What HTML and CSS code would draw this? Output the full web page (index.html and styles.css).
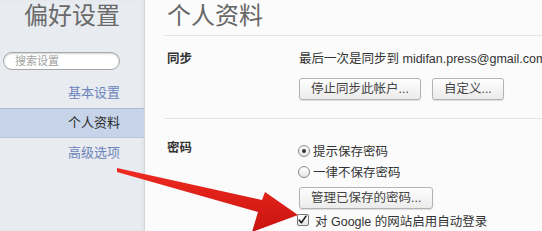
FILE: index.html
```html
<!DOCTYPE html>
<html lang="zh-CN">
<head>
<meta charset="utf-8">
<title>偏好设置</title>
<link rel="stylesheet" href="styles.css">
</head>
<body>
<div class="app">
  <aside class="sidebar">
    <div class="sidebar-title">偏好设置</div>
    <div class="search"><span class="search-placeholder">搜索设置</span></div>
    <nav class="nav">
      <div class="nav-item">基本设置</div>
      <div class="nav-item selected">个人资料</div>
      <div class="nav-item">高级选项</div>
    </nav>
  </aside>
  <main class="main">
    <div class="main-title">个人资料</div>
    <section class="section section-sync">
      <div class="label">同步</div>
      <div class="content">
        <div class="text-row">最后一次是同步到 midifan.press@gmail.com</div>
        <div class="button-row">
          <span class="btn">停止同步此帐户...</span>
          <span class="btn">自定义...</span>
        </div>
      </div>
    </section>
    <section class="section section-pass">
      <div class="label">密码</div>
      <div class="content">
        <div class="option-row"><span class="radio checked"></span><span>提示保存密码</span></div>
        <div class="option-row"><span class="radio"></span><span>一律不保存密码</span></div>
        <div class="button-row single">
          <span class="btn">管理已保存的密码...</span>
        </div>
        <div class="option-row check-row">
          <span class="checkbox"><svg viewBox="0 0 12 12" width="12" height="12"><path d="M2.5 6.2 L4.8 9 L9.8 1.8" fill="none" stroke="#222" stroke-width="1.8" stroke-linecap="round" stroke-linejoin="round"/></svg></span>
          <span>对 Google 的网站启用自动登录</span>
        </div>
      </div>
    </section>
  </main>
</div>
<svg class="arrow" viewBox="0 0 542 231" width="542" height="231">
  <defs>
    <linearGradient id="ag" x1="0" y1="0" x2="0" y2="1">
      <stop offset="0" stop-color="#f02a20"/>
      <stop offset="1" stop-color="#c8140f"/>
    </linearGradient>
  </defs>
  <polygon points="117,168 262,200 265,192 298,215 252,232 258,212 117,172" fill="url(#ag)"/>
</svg>
</body>
</html>
```
FILE: styles.css
```css
html, body {
  margin: 0;
  padding: 0;
}
body {
  width: 542px;
  height: 231px;
  overflow: hidden;
  position: relative;
  background: #fbfbfb;
  font-family: "Liberation Sans", "Noto Sans CJK SC", sans-serif;
  font-size: 12.5px;
  color: #333;
}
.app {
  display: flex;
  height: 231px;
}
.sidebar {
  width: 144px;
  flex: none;
  background: #e8ebf0;
  border-right: 1px solid #d3d7dd;
  box-shadow: inset -2px 0 3px rgba(0, 0, 0, 0.04);
}
.sidebar-title {
  margin-top: 2px;
  line-height: 28px;
  font-size: 24px;
  color: #6a6a6a;
  text-align: right;
  padding-right: 24px;
}
.search {
  margin: 22px 0 0 3px;
  width: 117px;
  height: 18px;
  box-sizing: border-box;
  border: 1px solid #a6a6a6;
  border-radius: 9px;
  background: #fff;
  box-shadow: inset 0 1px 2px rgba(0, 0, 0, 0.18);
  display: flex;
  align-items: center;
  padding-left: 11px;
}
.search-placeholder {
  font-size: 11px;
  color: #a2a2a2;
  line-height: 14px;
}
.nav {
  margin-top: 8px;
}
.nav-item {
  height: 30px;
  line-height: 30px;
  box-sizing: border-box;
  text-align: right;
  padding-right: 24px;
  font-size: 13px;
  color: #6c84bb;
}
.nav-item.selected {
  background: #c6d3e8;
  border-top: 1px solid #a9bbd7;
  border-bottom: 1px solid #b6c5dc;
  line-height: 28px;
  color: #2a2a2a;
}
.main {
  flex: 1;
  padding-left: 20px;
}
.main-title {
  margin-top: 2px;
  line-height: 28px;
  font-size: 24px;
  color: #666;
  padding: 0 0 5px 2px;
  border-bottom: 1px solid #e3e3e3;
}
.section {
  display: grid;
  grid-template-columns: 134px 1fr;
  border-bottom: 1px solid #e3e3e3;
}
.section-sync {
  padding: 15px 0 18px;
}
.section-pass {
  padding-top: 21px;
  border-bottom: none;
}
.label {
  padding-left: 2px;
  font-weight: bold;
  line-height: 16px;
  color: #333;
  white-space: nowrap;
}
.content {
  white-space: nowrap;
}
.text-row {
  line-height: 16px;
}
.button-row {
  display: flex;
  gap: 11px;
  margin-top: 11px;
}
.button-row.single {
  margin-top: 5px;
}
.btn {
  height: 22px;
  line-height: 20px;
  box-sizing: border-box;
  padding: 0 11px;
  border: 1px solid #b3b3b3;
  border-radius: 3px;
  background: linear-gradient(#fefefe, #ebebeb);
  box-shadow: 0 1px 1px rgba(0, 0, 0, 0.12);
  color: #444;
}
.option-row {
  display: flex;
  align-items: center;
  height: 21px;
  gap: 3px;
}
.radio {
  width: 12px;
  height: 12px;
  box-sizing: border-box;
  margin-left: -1px;
  border: 1px solid #8a8a8a;
  border-radius: 50%;
  background: linear-gradient(#ffffff, #e6e6e6);
  display: flex;
  align-items: center;
  justify-content: center;
}
.radio.checked::after {
  content: "";
  width: 4px;
  height: 4px;
  border-radius: 50%;
  background: #333;
}
.check-row {
  margin-top: 1px;
  height: 20px;
  gap: 6px;
}
.checkbox {
  width: 12px;
  height: 12px;
  box-sizing: border-box;
  margin-left: -2px;
  border: 1px solid #777;
  border-radius: 2px;
  background: linear-gradient(#ffffff, #e6e6e6);
  display: flex;
}
.checkbox svg {
  margin: -1px 0 0 -1px;
}
.arrow {
  position: absolute;
  left: 0;
  top: 0;
  pointer-events: none;
}
```
